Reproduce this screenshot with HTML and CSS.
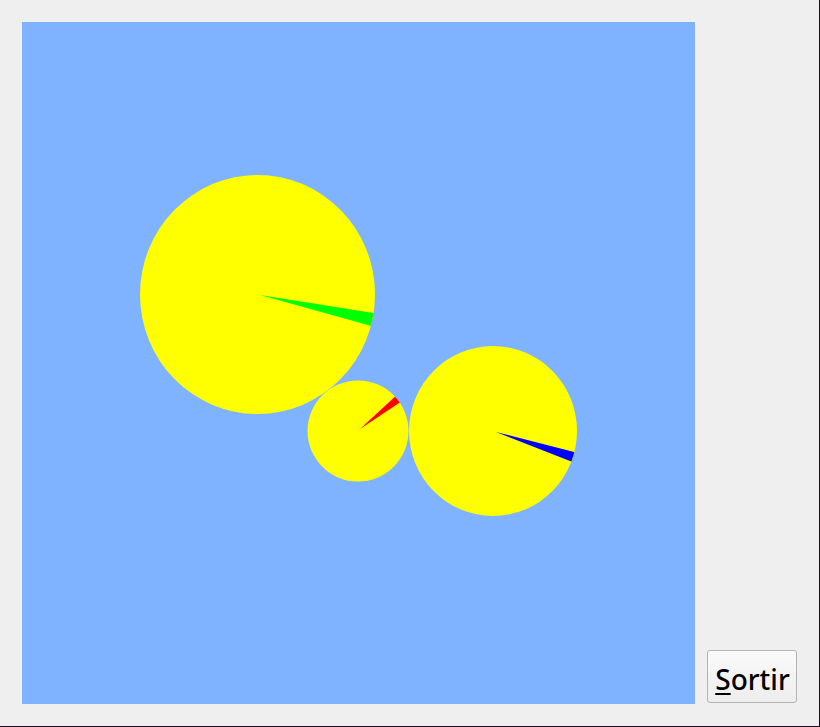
FILE: index.html
```html
<!DOCTYPE html>
<html>
<head>
<meta charset="utf-8">
<link rel="stylesheet" href="styles.css">
</head>
<body>
<div class="window">
  <svg class="canvas" width="673" height="682" viewBox="0 0 673 682">
    <defs>
      <clipPath id="c1"><ellipse cx="235.5" cy="272.5" rx="117.5" ry="119.5"/></clipPath>
      <clipPath id="c2"><circle cx="336" cy="409" r="50.5"/></clipPath>
      <clipPath id="c3"><ellipse cx="471" cy="409" rx="84" ry="85"/></clipPath>
    </defs>
    <rect width="673" height="682" fill="#80b3ff"/>
    <ellipse cx="235.5" cy="272.5" rx="117.5" ry="119.5" fill="#ffff00"/>
    <polygon clip-path="url(#c1)" points="238,273 361,292.5 357,306" fill="#00ff00"/>
    <circle cx="336" cy="409" r="50.5" fill="#ffff00"/>
    <polygon clip-path="url(#c2)" points="338,407 378,370 383,377" fill="#ff0000"/>
    <ellipse cx="471" cy="409" rx="84" ry="85" fill="#ffff00"/>
    <polygon clip-path="url(#c3)" points="474,410 562,432.5 558,443" fill="#0000ff"/>
  </svg>
  <div class="side">
    <button class="btn"><span class="mn">S</span>ortir</button>
  </div>
</div>
</body>
</html>
```

FILE: styles.css
```css
html, body {
  margin: 0;
  padding: 0;
  background: #1c0c1c;
}
.window {
  width: 819px;
  height: 726px;
  background: #efefef;
  box-sizing: border-box;
  padding: 22px 0 0 22px;
  display: flex;
  align-items: flex-start;
  gap: 12px;
}
.canvas {
  display: block;
  flex: none;
}
.side {
  height: 682px;
  display: flex;
  flex-direction: column;
  justify-content: flex-end;
}
.btn {
  width: 90px;
  height: 53px;
  margin-bottom: 1px;
  box-sizing: border-box;
  border: 1px solid #b4b4b4;
  border-radius: 3px;
  background: linear-gradient(#fafafa, #ededed);
  font-family: "Noto Sans", "DejaVu Sans", sans-serif;
  font-size: 28px;
  font-weight: 500;
  color: #000;
  padding: 4px 0 0 1px;
  display: flex;
  align-items: center;
  justify-content: center;
  line-height: 1;
}
.mn {
  text-decoration: underline;
  text-decoration-thickness: 2px;
  text-underline-offset: 3px;
}
```
